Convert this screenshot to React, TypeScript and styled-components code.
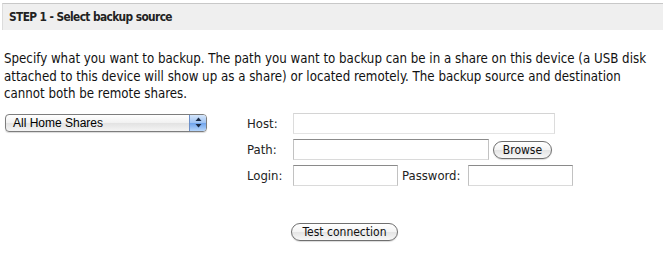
import styled, { createGlobalStyle } from "styled-components"

const Global = createGlobalStyle`
    html, body {
        margin: 0;
        padding: 0;
        background: #fff;
    }

    body {
        font-family: "DejaVu Sans Condensed", "Liberation Sans", sans-serif;
        font-size: 13px;
        color: #111;
    }
`

const Page = styled.div`
    width: 663px;
    height: 253px;
    overflow: hidden;
`

const StepHeader = styled.h2`
    margin: 3px 0 0 2px;
    height: 26px;
    padding: 0 6px;
    display: flex;
    align-items: center;
    background-color: #efefef;
    border-top: 1px solid #c8c8c8;
    border-left: 1px solid #dcdcdc;
    font-size: 11.8px;
    letter-spacing: -0.6px;
    font-weight: bold;
    color: #222;
`

const Intro = styled.p`
    margin: 20px 0 0 4px;
    font-size: 13.2px;
    line-height: 17.5px;
    color: #111;
`

const Body = styled.div`
    display: flex;
    margin-top: 8px;
`

const SourceColumn = styled.div`
    width: 247px;
    padding: 3px 0 0 5px;
    box-sizing: border-box;
`

const SelectBox = styled.div`
    width: 202px;
    height: 18px;
    display: flex;
    align-items: stretch;
    border: 1px solid #7d7d7d;
    border-radius: 4px;
    box-sizing: border-box;
    overflow: hidden;
    background: linear-gradient(#ffffff, #f1f1f1 50%, #e2e2e2 51%, #f4f4f4);
    box-shadow: 0 1px 1px rgba(0, 0, 0, 0.15);
`

const SelectText = styled.span`
    flex: 1;
    padding-left: 7px;
    display: flex;
    align-items: center;
    font-family: "Liberation Sans", sans-serif;
    font-size: 12px;
    color: #000;
`

const Stepper = styled.span`
    width: 16px;
    display: flex;
    align-items: center;
    justify-content: center;
    border-left: 1px solid #6c8fc7;
    background: linear-gradient(#d5e6fb, #9cc1f2 50%, #6ea3ec 51%, #b6d6fb);
`

const Form = styled.div`
    display: flex;
    flex-direction: column;
`

const FieldRow = styled.div`
    display: flex;
    align-items: center;
    height: 26px;
`

const Label = styled.label<{ $width?: number; $gap?: number }>`
    width: ${p => p.$width ?? 46}px;
    padding-left: ${p => p.$gap ?? 0}px;
    color: #222;
`

const TextInput = styled.input<{ $width: number; $soft?: boolean }>`
    width: ${p => p.$width}px;
    height: 21px;
    margin: 0;
    padding: 1px 3px;
    box-sizing: border-box;
    font: inherit;
    background: #fff;
    border: 1px solid ${p => (p.$soft ? "#dcdcdc" : "#c2c2c2")};
    border-top-color: ${p => (p.$soft ? "#d4d4d4" : "#8a8a8a")};
    border-bottom-color: ${p => (p.$soft ? "#e4e4e4" : "#dadada")};
    outline: none;
`

const PillButton = styled.button<{ $width: number }>`
    width: ${p => p.$width}px;
    height: 18px;
    padding: 0;
    border: 1px solid #6f6f6f;
    border-radius: 9px;
    background: linear-gradient(#ffffff, #f3f3f3 50%, #e4e4e4 51%, #f7f7f7);
    box-shadow: 0 1px 1px rgba(0, 0, 0, 0.15);
    font-family: "DejaVu Sans Condensed", "Liberation Sans", sans-serif;
    font-size: 12px;
    color: #111;
    line-height: 16px;
`

const BrowseButton = styled(PillButton)`
    margin-left: 4px;
`

const TestButton = styled(PillButton)`
    margin: 34px 0 0 44px;
`

export default function App() {
    return (
        <Page>
            <Global />
            <StepHeader>STEP 1 - Select backup source</StepHeader>
            <Intro>
                Specify what you want to backup. The path you want to backup can be in a share on this device (a USB disk attached to this device will show up as a share) or located remotely. The backup source and destination cannot both be remote shares.
            </Intro>
            <Body>
                <SourceColumn>
                    <SelectBox>
                        <SelectText>All Home Shares</SelectText>
                        <Stepper>
                            <svg width="7" height="11" viewBox="0 0 7 11">
                                <path d="M3.5 0.5 L6.5 4 H0.5 Z" fill="#1a2a44" />
                                <path d="M3.5 10.5 L6.5 7 H0.5 Z" fill="#1a2a44" />
                            </svg>
                        </Stepper>
                    </SelectBox>
                </SourceColumn>
                <Form>
                    <FieldRow>
                        <Label>Host:</Label>
                        <TextInput $width={262} $soft />
                    </FieldRow>
                    <FieldRow>
                        <Label>Path:</Label>
                        <TextInput $width={196} />
                        <BrowseButton $width={59}>Browse</BrowseButton>
                    </FieldRow>
                    <FieldRow>
                        <Label>Login:</Label>
                        <TextInput $width={105} />
                        <Label $width={66} $gap={4}>Password:</Label>
                        <TextInput $width={105} />
                    </FieldRow>
                    <TestButton $width={107}>Test connection</TestButton>
                </Form>
            </Body>
        </Page>
    )
}
